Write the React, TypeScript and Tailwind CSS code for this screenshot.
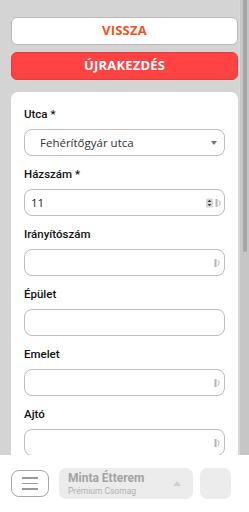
import { useState } from "react";

const fields = [
  { label: "Irányítószám" },
  { label: "Épület", plain: true },
  { label: "Emelet" },
  { label: "Ajtó" },
];

const AutofillMark = () => (
  <svg width="6" height="10" viewBox="0 0 6 10" className="shrink-0">
    <rect x="0.5" y="1" width="2" height="8" fill="#b5b5b5" />
    <path d="M3.5 2.5 L5 3.5 L5 6.5 L3.5 7.5" stroke="#b5b5b5" strokeWidth="1" fill="none" />
  </svg>
);

const Spinner = () => (
  <svg width="7" height="10" viewBox="0 0 7 10" className="shrink-0">
    <rect x="0" y="0.5" width="7" height="9" rx="1" fill="#d8d8d8" />
    <path d="M1.5 4 L3.5 1.8 L5.5 4 Z M1.5 6 L3.5 8.2 L5.5 6 Z" fill="#444" />
  </svg>
);

const Label = ({ children }: { children: string }) => (
  <div className="text-[11.5px] leading-4 font-medium text-[#111] mb-[7px] font-['Roboto',sans-serif]">
    {children}
  </div>
);

const App = () => {
  const [houseNo, setHouseNo] = useState("11");

  return (
    <div className="h-[512px] w-[249px] flex flex-col bg-white font-['Open_Sans',sans-serif]">
      <div className="h-[455px] flex bg-[#d4d4d4]">
        <div className="flex-1 overflow-hidden">
          <div className="pt-[17px] pl-[11px] pr-[1px] flex flex-col">
            <button className="h-[28px] rounded-[6px] bg-white border border-[#b9b9b9] text-[#f4511e] text-[13px] font-bold tracking-[0.2px]">
              VISSZA
            </button>
            <button className="mt-[7px] h-[28px] rounded-[6px] bg-[#ff4242] border border-[#e93a3a] text-white text-[13px] font-bold tracking-[0.2px]">
              ÚJRAKEZDÉS
            </button>

            <div className="mt-[12px] bg-white rounded-[7px] px-[13px] pt-[14px] pb-4">
              <Label>Utca *</Label>
              <div className="h-[27px] rounded-[8px] border border-[#bdbdbd] flex items-center pl-[15px] pr-[7px] mb-[10px]">
                <span className="flex-1 text-[11.5px] text-[#333]">Fehérítőgyár utca</span>
                <svg width="6" height="4" viewBox="0 0 6 4">
                  <path d="M0 0 L6 0 L3 4 Z" fill="#777" />
                </svg>
              </div>

              <Label>Házszám *</Label>
              <div className="h-[27px] rounded-[8px] border border-[#bdbdbd] flex items-center pl-[6px] pr-[3px] gap-[2px] mb-[10px]">
                <input
                  value={houseNo}
                  onChange={(e) => setHouseNo(e.target.value)}
                  className="flex-1 min-w-0 outline-none text-[11.5px] text-[#222] bg-transparent"
                />
                <Spinner />
                <AutofillMark />
              </div>

              {fields.map((f) => (
                <div key={f.label}>
                  <Label>{f.label}</Label>
                  <div className="h-[27px] rounded-[8px] border border-[#bdbdbd] flex items-center justify-end pr-[4px] mb-[10px]">
                    {!f.plain && <AutofillMark />}
                  </div>
                </div>
              ))}
            </div>
          </div>
        </div>
        {/* scrollbar */}
        <div className="w-[10px] bg-[#c6c6c6] border-l border-[#d9d9d9] pl-[3px] pr-[2px]">
          <div className="h-[252px] bg-[#a6a6a6] rounded-b-[2px]" />
        </div>
      </div>

      <div className="h-[57px] bg-white flex items-center pl-[11px]">
        <button className="w-[38px] h-[27px] rounded-[8px] border border-[#a8a8a8] flex flex-col items-center justify-center gap-[4px]">
          <span className="block w-[16px] h-[1.5px] bg-[#9a9a9a]" />
          <span className="block w-[16px] h-[1.5px] bg-[#9a9a9a]" />
          <span className="block w-[16px] h-[1.5px] bg-[#9a9a9a]" />
        </button>
        <div className="ml-[10px] w-[134px] h-[31px] rounded-[7px] bg-[#ececec] flex items-center pl-[9px] pr-[12px]">
          <div className="flex-1 flex flex-col">
            <span className="text-[12px] leading-[15px] font-bold text-[#a3a3a3] font-['Roboto',sans-serif]">
              Minta Étterem
            </span>
            <span className="text-[8.5px] leading-[11px] text-[#b0b0b0] font-['Roboto',sans-serif]">
              Prémium Csomag
            </span>
          </div>
          <svg width="8" height="5" viewBox="0 0 8 5">
            <path d="M0 5 L4 0 L8 5 Z" fill="#cfcfcf" />
          </svg>
        </div>
        <div className="ml-[7px] w-[31px] h-[31px] rounded-[7px] bg-[#ececec]" />
      </div>
    </div>
  );
};

export default App;
